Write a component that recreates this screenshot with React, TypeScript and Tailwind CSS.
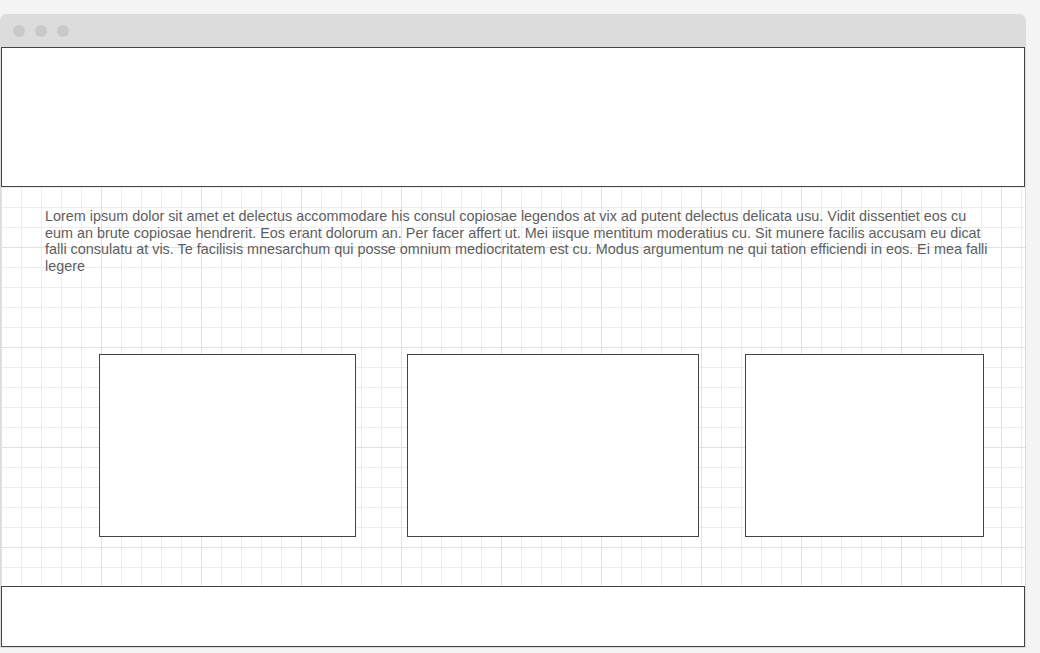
const Box = ({ className = "" }: { className?: string }) => (
  <div className={`border border-[#444] bg-white ${className}`} />
);

export default function App() {
  return (
    <div className="min-h-screen bg-[#f4f4f4] pt-[14px] font-['Liberation_Sans',Arial,sans-serif]">
      <div className="w-[1026px] rounded-t-[6px] overflow-hidden border-x border-b border-[#dcdcdc] bg-white">
        <div className="h-[33px] bg-[#dcdcdc] flex items-center gap-[10px] pl-[12px]">
          <span className="w-[12px] h-[12px] rounded-full bg-[#c9c9c9]" />
          <span className="w-[12px] h-[12px] rounded-full bg-[#c9c9c9]" />
          <span className="w-[12px] h-[12px] rounded-full bg-[#c9c9c9]" />
        </div>
        <div className="flex flex-col bg-white bg-[linear-gradient(to_right,#e2e2e2_1px,transparent_1px),linear-gradient(to_bottom,#e2e2e2_1px,transparent_1px),linear-gradient(to_right,#ededed_1px,transparent_1px),linear-gradient(to_bottom,#ededed_1px,transparent_1px)] bg-[size:100px_100px,100px_100px,20px_20px,20px_20px]">
          <Box className="h-[140px]" />
          <p className="ml-[44px] mt-[21px] w-[949px] text-[14.4px] leading-[16.7px] text-[#5e5e5e]">
            Lorem ipsum dolor sit amet et delectus accommodare his consul copiosae legendos at vix ad putent delectus delicata usu. Vidit dissentiet eos cu eum an brute copiosae hendrerit. Eos erant dolorum an. Per facer affert ut. Mei iisque mentitum moderatius cu. Sit munere facilis accusam eu dicat falli consulatu at vis. Te facilisis mnesarchum qui posse omnium mediocritatem est cu. Modus argumentum ne qui tation efficiendi in eos. Ei mea falli legere
          </p>
          <div className="flex mt-[79px] pl-[98px]">
            <Box className="w-[257px] h-[183px]" />
            <Box className="w-[292px] h-[183px] ml-[51px]" />
            <Box className="w-[239px] h-[183px] ml-[46px]" />
          </div>
          <Box className="h-[61px] mt-[49px]" />
        </div>
      </div>
    </div>
  );
}
